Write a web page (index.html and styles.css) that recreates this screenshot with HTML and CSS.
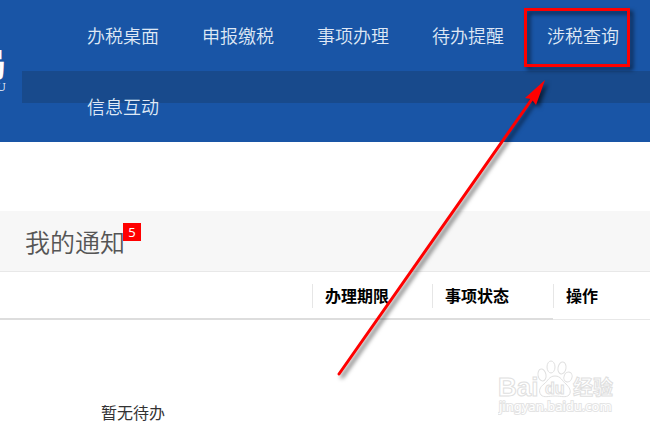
FILE: index.html
```html
<!DOCTYPE html>
<html lang="zh-CN">
<head>
    <meta charset="UTF-8" />
    <title>办税桌面</title>
    <link rel="stylesheet" href="styles.css">
</head>
<body>

    <header class="header">
        <div class="logo">
            <span class="logo-name">局</span>
            <span class="logo-sub">U</span>
        </div>
        <div class="sub-bar"></div>
        <nav class="nav">
            <a href="#">办税桌面</a>
            <a href="#">申报缴税</a>
            <a href="#">事项办理</a>
            <a href="#">待办提醒</a>
            <a href="#" class="marked">涉税查询</a>
            <a href="#">信息互动</a>
        </nav>
    </header>

    <main class="content">
        <div class="title-bar">
            <h2>我的通知<span class="badge">5</span></h2>
        </div>

        <table class="todo">
            <thead>
                <tr>
                    <th class="col-name"></th>
                    <th class="col-limit"><span>办理期限</span></th>
                    <th class="col-state"><span>事项状态</span></th>
                    <th class="col-action"><span>操作</span></th>
                </tr>
            </thead>
            <tbody>
                <tr>
                    <td colspan="4">暂无待办</td>
                </tr>
            </tbody>
        </table>
    </main>

    <!-- 箭头 -->
    <svg class="arrow" width="230" height="310" viewBox="330 75 230 310" aria-hidden="true">
        <path d="M339 374 L532 99" stroke="#f00" stroke-width="3" stroke-linecap="round" fill="none" />
        <path d="M545 80 L525 98 L531 99 L533 101 L536 105 Z" fill="#f00" />
    </svg>

    <!-- 水印 -->
    <svg class="watermark" width="120" height="60" viewBox="0 0 120 60" aria-hidden="true">
        <g class="outline">
            <text x="0" y="36" class="mark-latin">Bai</text>
            <ellipse cx="44" cy="15" rx="4" ry="6" transform="rotate(-10 44 15)" />
            <ellipse cx="53" cy="7" rx="4" ry="6" />
            <ellipse cx="64" cy="8" rx="4" ry="6" transform="rotate(10 64 8)" />
            <ellipse cx="70" cy="17" rx="4" ry="5" transform="rotate(20 70 17)" />
            <path d="M57 16 C51 16 50 21 46 24 C42 27 40 31 43 35 C46 38 51 36 57 36 C63 36 68 38 71 35 C74 31 71 27 68 24 C64 21 63 16 57 16 Z" />
            <text x="47" y="34" class="mark-du">du</text>
            <text x="75" y="35" class="mark-cn">经验</text>
        </g>
        <text x="1" y="51" class="mark-url">jingyan.baidu.com</text>
    </svg>

</body>
</html>
```

FILE: styles.css
```css
* {
    margin: 0;
    padding: 0;
    box-sizing: border-box;
}

body {
    position: relative;
    min-height: 100vh;
    overflow: hidden;
    background-color: #fff;
    font-family: "Noto Sans", "Noto Sans CJK SC", sans-serif;
    font-size: 16px;
    color: #333;
}

.header {
    position: relative;
    display: flex;
    background-color: #1955a6;
}

.logo {
    display: flex;
    flex-direction: column;
    align-items: flex-end;
    width: 6px;
    padding-top: 48px;
    color: #fff;
}

.logo-name {
    font-size: 32px;
    line-height: 32px;
    font-weight: bold;
}

.logo-sub {
    font-family: "Liberation Serif", serif;
    font-size: 13px;
    line-height: 13px;
}

/* 菜单后面的深色条 */
.sub-bar {
    position: absolute;
    top: 71px;
    left: 22px;
    right: 0;
    height: 32px;
    background-color: #184a8c;
}

.nav {
    position: relative;
    flex: 1;
    display: flex;
    flex-wrap: wrap;
    column-gap: 43px;
    padding-left: 81px;
}

.nav a {
    position: relative;
    font-family: "Noto Sans CJK SC", sans-serif;
    font-size: 18px;
    font-weight: 350;
    line-height: 71px;
    color: #dfe8f5;
    text-decoration: none;
}

.marked::after {
    content: "";
    position: absolute;
    top: 8px;
    bottom: 4px;
    left: -23px;
    right: -11px;
    border: 3px solid #f00;
    filter: drop-shadow(3px 3px 2px rgba(0, 0, 0, 0.6));
}

.content {
    padding-top: 69px;
}

.title-bar {
    padding-left: 25px;
    background-color: #f7f7f7;
    border-bottom: 1px solid #e8e8e8;
}

.title-bar h2 {
    position: relative;
    display: inline-block;
    vertical-align: top;
    font-family: "Noto Sans CJK SC", sans-serif;
    font-size: 25px;
    font-weight: 350;
    line-height: 60px;
    height: 60px;
    color: #555;
}

.badge {
    position: absolute;
    top: 12px;
    left: 98px;
    width: 18px;
    height: 18px;
    background-color: #f00;
    color: #fff;
    font-family: "Noto Sans", sans-serif;
    font-size: 13px;
    font-weight: normal;
    line-height: 18px;
    text-align: center;
}

.todo {
    width: 100%;
    table-layout: fixed;
    border-collapse: separate;
    border-spacing: 0;
}

.todo th {
    height: 48px;
    padding: 12px 0 10px;
    vertical-align: top;
    text-align: left;
    color: #000;
    border-bottom: 2px solid #ddd;
}

.todo th span {
    display: block;
    padding-left: 12px;
    border-left: 1px solid #e6e6e6;
    line-height: 24px;
}

.col-name {
    width: 312px;
}

.col-limit {
    width: 120px;
}

.col-state {
    width: 121px;
}

.todo .col-action {
    padding-bottom: 11px;
    border-bottom: 1px solid #e8e8e8;
}

.todo td {
    padding: 81px 0 0 101px;
    line-height: 24px;
}

.arrow {
    position: absolute;
    top: 75px;
    left: 330px;
    filter: drop-shadow(3px 3px 2px rgba(0, 0, 0, 0.6));
}

.watermark {
    position: absolute;
    top: 360px;
    left: 498px;
}

.outline {
    fill: #fff;
    stroke: #e0e0e0;
    stroke-width: 1;
}

.mark-latin {
    font-family: "Liberation Sans", sans-serif;
    font-size: 26px;
    font-weight: bold;
}

.mark-du {
    font-family: "Liberation Sans", sans-serif;
    font-size: 16px;
    font-weight: bold;
}

.mark-cn {
    font-family: "Noto Sans CJK SC", sans-serif;
    font-size: 20px;
    font-weight: bold;
}

.mark-url {
    font-family: "Noto Sans", sans-serif;
    font-size: 13px;
    fill: #fff;
    stroke: #e4e4e4;
    stroke-width: 2;
    paint-order: stroke;
}
```
